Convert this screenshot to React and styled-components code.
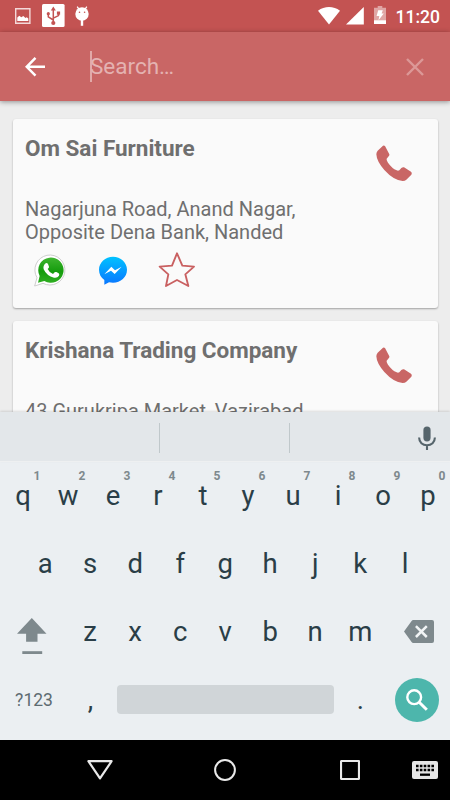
import React, { useState } from "react";
import styled, { createGlobalStyle, ThemeProvider } from "styled-components";

const theme = {
	primary: "#c96665",
	primaryDark: "#c35352",
	page: "#ededed",
	card: "#fafafa",
	text: "#6f6f6f",
	keyboard: "#ebeff2",
	strip: "#e3e7ea",
	key: "#2a3e47",
	keyMuted: "#7e898d",
	accent: "#4db6ac",
};

const contacts = [
	{
		name: "Om Sai Furniture",
		address: ["Nagarjuna Road, Anand Nagar,", "Opposite Dena Bank, Nanded"],
	},
	{
		name: "Krishana Trading Company",
		address: ["43 Gurukripa Market, Vazirabad"],
	},
];

const topRow = ["q", "w", "e", "r", "t", "y", "u", "i", "o", "p"];
const middleRow = ["a", "s", "d", "f", "g", "h", "j", "k", "l"];
const bottomRow = ["z", "x", "c", "v", "b", "n", "m"];

function PictureIcon() {
	return (
		<svg width="16" height="16" viewBox="0 0 16 16">
			<path d="M.7.7h14.2v14.6H.7z" fill="none" stroke="#f4d9d9" strokeWidth="1.4" />
			<path d="M2.3 13V9.6l2-1.8 2 1.4 2-1.3 2.2 2 1.2-.6 1.6 1.2V13z" fill="#fff" />
		</svg>
	);
}

function UsbIcon() {
	return (
		<svg width="23" height="23" viewBox="0 0 23 23">
			<rect width="22.6" height="23" rx="1.5" fill="#fff" />
			<g fill="none" stroke="#c35352" strokeWidth="1.5">
				<path d="M11.3 5v14M11.3 16 6.3 12.8V10M11.3 14.2l5.2-2.6V9" />
			</g>
			<g fill="#c35352">
				<path d="M11.3 2.6 13.8 6.4H8.8z" />
				<circle cx="11.3" cy="19" r="2.1" />
				<circle cx="6.3" cy="9.7" r="1.6" />
				<path d="M14.9 7.5h3.2v3.2h-3.2z" />
			</g>
		</svg>
	);
}

function DroidIcon() {
	return (
		<svg width="14" height="20" viewBox="0 0 14 20">
			<path d="M2.2.6 4.2 3.6M11.8.6 9.8 3.6" stroke="#fff" strokeWidth="1.3" />
			<circle cx="7" cy="8" r="6.7" fill="#fff" />
			<path d="M7 14v5.8" stroke="#fff" strokeWidth="2.4" />
			<circle cx="4.5" cy="6.2" r=".8" fill="#c35352" />
			<circle cx="9.6" cy="6.2" r=".8" fill="#c35352" />
		</svg>
	);
}

function WifiIcon() {
	return (
		<svg width="22" height="18" viewBox="0 0 22 18">
			<path d="M0 3.8C6.5-1.2 15.5-1.2 22 3.8L11 17.6z" fill="#fff" />
		</svg>
	);
}

function SignalIcon() {
	return (
		<svg width="18" height="18" viewBox="0 0 18 18">
			<path d="M17.8 0v17.6H0z" fill="#fff" />
		</svg>
	);
}

function BatteryIcon() {
	return (
		<svg width="12" height="18" viewBox="0 0 12 18">
			<path d="M3.7 0h4.6v1.7H12V18H0V1.7h3.7z" fill="#e0a6a5" />
			<path d="M0 14.3h12V18H0z" fill="#fff" />
			<path d="M4.2 4.3h4.6L7.6 7.5h2.2L4.5 14.3l.8-4.3H2.6z" fill="#fff" />
		</svg>
	);
}

function BackIcon() {
	return (
		<svg width="20" height="20" viewBox="0 0 20 20">
			<path d="M10.5.9 1.7 9.8l8.8 8.9M1.7 9.8H20" fill="none" stroke="#fff" strokeWidth="2.5" />
		</svg>
	);
}

function ClearIcon() {
	return (
		<svg width="18" height="18" viewBox="0 0 18 18">
			<path d="m1 1 16 16M17 1 1 17" stroke="#dc9897" strokeWidth="2.4" />
		</svg>
	);
}

function CallIcon() {
	return (
		<svg width="36" height="36" viewBox="0 0 108 108">
			<path
				d="M21 2Q24 0 27 3L40 28Q41 31 38 34L32 41Q31 45 36 53Q48 70 62 76Q66 78 70 76L76 69Q80 66 84 67L105 80Q109 83 106 89L91 104Q87 108 80 108Q53 106 25 75Q2 49 1 28Q1 22 5 17Z"
				fill="#c96665"
			/>
		</svg>
	);
}

function WhatsappIcon() {
	return (
		<svg width="32" height="33" viewBox="0 0 96 99">
			<defs>
				<linearGradient id="wa" x1="0" y1="0" x2="0" y2="1">
					<stop offset="0" stopColor="#3fb530" />
					<stop offset=".55" stopColor="#159c0d" />
					<stop offset="1" stopColor="#2fae22" />
				</linearGradient>
			</defs>
			<path
				d="M2 96 9 71A45 45 0 1 1 27 88Z"
				fill="#fff"
				stroke="#c4c4c4"
				strokeWidth="2.5"
				strokeLinejoin="round"
			/>
			<path d="M12 86 17 66A38 38 0 1 1 31 81Z" fill="url(#wa)" />
			<path
				d="M35 28Q39 26 42 30L45 38Q46 40 41 45Q46 56 57 60L62 55Q64 53 67 54L74 58Q77 60 75 65Q70 73 60 71Q38 66 29 46Q26 35 35 28Z"
				fill="#fff"
			/>
		</svg>
	);
}

function MessengerIcon() {
	return (
		<svg width="30" height="29" viewBox="0 0 90 87">
			<defs>
				<linearGradient id="ms" x1="0" y1="0" x2="0" y2="1">
					<stop offset="0" stopColor="#00c2ff" />
					<stop offset="1" stopColor="#0a76ff" />
				</linearGradient>
			</defs>
			<path d="M45 2C22 2 3 19 3 41C3 54 9 65 19 72V86L33 79Q39 80 45 80C68 80 87 63 87 41S68 2 45 2Z" fill="url(#ms)" />
			<path d="M19 55 40 32 51 43 71 32 50 54 39 44Z" fill="#fff" />
		</svg>
	);
}

function StarIcon() {
	return (
		<svg width="38" height="36" viewBox="0 0 114 108">
			<path
				d="M57 4 73 41 108 44 82 67 91 102 57 84 24 102 31 67 5 44 42 41Z"
				fill="none"
				stroke="#c96061"
				strokeWidth="5.6"
				strokeLinejoin="round"
			/>
		</svg>
	);
}

function MicIcon() {
	return (
		<svg width="18" height="24" viewBox="0 0 18 24">
			<rect x="5.4" y=".4" width="7.2" height="15" rx="3.6" fill="#56656c" />
			<path d="M1.1 11.6c0 4.7 3.5 7.6 7.9 7.6s7.9-2.9 7.9-7.6M9 19v5" fill="none" stroke="#56656c" strokeWidth="2.1" />
		</svg>
	);
}

function ShiftIcon() {
	return (
		<svg width="30" height="37" viewBox="0 0 30 37">
			<path d="M14.8 0 29.5 15.7h-9V23.7h-11.4V15.7H0z" fill="#7e898d" />
			<path d="M5.3 33.2h19.9v2.8H5.3z" fill="#7e898d" />
		</svg>
	);
}

function BackspaceIcon() {
	return (
		<svg width="30" height="23" viewBox="0 0 30 23">
			<path d="M7.6.9Q8.2 0 9.3 0H28Q30 0 30 2v19q0 2-2 2H9.3q-1.1 0-1.7-.9L0 11.5z" fill="#7e898d" />
			<path d="m11.9 6.1 10.9 10.9M22.8 6.1 11.9 17" stroke="#f1f4f5" strokeWidth="2.5" />
		</svg>
	);
}

function SearchIcon() {
	return (
		<svg width="22" height="22" viewBox="0 0 22 22">
			<circle cx="8.2" cy="8.2" r="6.9" fill="none" stroke="#fff" strokeWidth="2.4" />
			<path d="m13.2 13.2 7.6 7.6" stroke="#fff" strokeWidth="3" />
		</svg>
	);
}

function NavBackIcon() {
	return (
		<svg width="26" height="20" viewBox="0 0 26 20">
			<path d="M1.4 1.2h23.2L13 18.3z" fill="none" stroke="#e9e9e9" strokeWidth="2.2" strokeLinejoin="round" />
		</svg>
	);
}

function NavHomeIcon() {
	return (
		<svg width="22" height="22" viewBox="0 0 22 22">
			<circle cx="11" cy="11" r="9.9" fill="none" stroke="#e9e9e9" strokeWidth="2" />
		</svg>
	);
}

function NavRecentIcon() {
	return (
		<svg width="20" height="20" viewBox="0 0 20 20">
			<rect x="1" y="1" width="18" height="18" rx=".6" fill="none" stroke="#e9e9e9" strokeWidth="2.2" />
		</svg>
	);
}

function NavKeyboardIcon() {
	return (
		<svg width="26" height="18" viewBox="0 0 26 18">
			<rect width="26" height="18" rx="2" fill="#e6e6e6" />
			<path d="M4 5h18M4 9h18" stroke="#000" strokeWidth="2.3" strokeDasharray="2.6 1.25" />
			<path d="M8 13.7h10" stroke="#000" strokeWidth="2.3" />
		</svg>
	);
}

function ContactCard({ contact }) {
	return (
		<Card>
			<CardHead>
				<Name>{contact.name}</Name>
				<CallButton type="button" aria-label="Call">
					<CallIcon />
				</CallButton>
			</CardHead>
			<Address>
				{contact.address.map((line) => (
					<span key={line}>{line}</span>
				))}
			</Address>
			<Actions>
				<WhatsappIcon />
				<MessengerIcon />
				<StarIcon />
			</Actions>
		</Card>
	);
}

function App() {
	const [query, setQuery] = useState("");

	return (
		<ThemeProvider theme={theme}>
			<GlobalStyle />
			<Screen>
				<StatusBar>
					<PictureIcon />
					<UsbIcon />
					<DroidIcon />
					<StatusRight>
						<WifiIcon />
						<SignalIcon />
						<BatteryIcon />
						<Clock>11:20</Clock>
					</StatusRight>
				</StatusBar>
				<Toolbar>
					<BackIcon />
					<Caret />
					<SearchInput placeholder="Search…" value={query} onChange={(e) => setQuery(e.target.value)} />
					<ClearIcon />
				</Toolbar>
				<List>
					{contacts.map((contact) => (
						<ContactCard key={contact.name} contact={contact} />
					))}
				</List>
				<Suggestions>
					<Divider />
					<Divider />
					<MicIcon />
				</Suggestions>
				<Keyboard>
					<KeyRow>
						{topRow.map((letter, i) => (
							<Key key={letter} $nudge={1}>
								{letter}
								<Hint>{(i + 1) % 10}</Hint>
							</Key>
						))}
					</KeyRow>
					<KeyRow>
						{middleRow.map((letter) => (
							<Key key={letter}>{letter}</Key>
						))}
					</KeyRow>
					<KeyRow>
						<ShiftKey>
							<ShiftIcon />
						</ShiftKey>
						{bottomRow.map((letter) => (
							<Key key={letter}>{letter}</Key>
						))}
						<DeleteKey>
							<BackspaceIcon />
						</DeleteKey>
					</KeyRow>
					<KeyRow>
						<SymbolKey>?123</SymbolKey>
						<Key>,</Key>
						<SpaceKey />
						<Key>.</Key>
						<SearchKey>
							<SearchIcon />
						</SearchKey>
					</KeyRow>
				</Keyboard>
				<NavBar>
					<NavBackIcon />
					<NavHomeIcon />
					<NavRecentIcon />
					<NavKeyboardIcon />
				</NavBar>
			</Screen>
		</ThemeProvider>
	);
}

const GlobalStyle = createGlobalStyle`
	* {
		box-sizing: border-box;
	}
	body {
		margin: 0;
		font-family: Roboto, sans-serif;
	}
	svg {
		display: block;
		flex-shrink: 0;
	}
`;

const Screen = styled.div`
	width: 450px;
	height: 800px;
	display: flex;
	flex-direction: column;
	overflow: hidden;
	background: ${(props) => props.theme.page};
`;

const StatusBar = styled.header`
	height: 32px;
	flex-shrink: 0;
	display: flex;
	align-items: center;
	gap: 10.5px;
	padding: 0 10px 1px 15px;
	background: ${(props) => props.theme.primaryDark};
`;

const StatusRight = styled.div`
	margin-left: auto;
	display: flex;
	align-items: center;
	gap: 6px;

	svg:nth-child(3) {
		margin: -1px 4px 0 4px;
	}
`;

const Clock = styled.span`
	font-size: 17.5px;
	line-height: 20px;
	padding-top: 2px;
	font-weight: 500;
	color: #fff;
`;

const Toolbar = styled.div`
	height: 69.4px;
	flex-shrink: 0;
	display: flex;
	align-items: center;
	padding: 0 26px 0 25px;
	background: ${(props) => props.theme.primary};
	box-shadow: 0 1px 5px rgba(0, 0, 0, 0.4);
	z-index: 1;
`;

const Caret = styled.span`
	width: 2px;
	height: 31px;
	margin-left: 45px;
	background: #e2a9a8;
`;

const SearchInput = styled.input`
	flex: 1;
	min-width: 0;
	margin-left: -2px;
	padding: 0 0 2px;
	border: none;
	outline: none;
	background: transparent;
	font-family: inherit;
	font-size: 22.5px;
	color: #fff;

	&::placeholder {
		color: #e4b2b1;
		opacity: 1;
	}
`;

const List = styled.main`
	flex: 1;
	min-height: 0;
	overflow: hidden;
	display: flex;
	flex-direction: column;
	gap: 13px;
	padding: 17.6px 12.5px 0;
`;

const Card = styled.article`
	height: 189px;
	flex-shrink: 0;
	padding: 15.6px 12.5px;
	border-radius: 3px;
	background: ${(props) => props.theme.card};
	box-shadow: 0 1px 2px rgba(0, 0, 0, 0.32);
`;

const CardHead = styled.div`
	display: flex;
	justify-content: space-between;
	height: 63.4px;
`;

const Name = styled.h2`
	margin: 0;
	font-size: 22.5px;
	line-height: 27.5px;
	font-weight: 700;
	letter-spacing: -0.02px;
	color: ${(props) => props.theme.text};
`;

const CallButton = styled.button`
	align-self: flex-start;
	margin: 10px 13.5px 0 0;
	padding: 0;
	border: none;
	background: none;
`;

const Address = styled.p`
	margin: 0;
	display: flex;
	flex-direction: column;
	font-size: 20px;
	line-height: 23.4px;
	color: ${(props) => props.theme.text};
`;

const Actions = styled.div`
	display: flex;
	align-items: center;
	gap: 32px;
	margin: 7.5px 0 0 9.3px;

	svg:nth-child(3) {
		margin-left: -2.5px;
	}
`;

const Suggestions = styled.div`
	height: 50px;
	flex-shrink: 0;
	display: flex;
	align-items: center;
	padding: 3px 14px 0 0;
	border-bottom: 1px solid #eef0f1;
	background: ${(props) => props.theme.strip};
	box-shadow: 0 -1px 2px rgba(0, 0, 0, 0.12);
	z-index: 1;

	svg {
		margin-left: auto;
	}
`;

const Divider = styled.span`
	width: 1px;
	height: 30px;
	margin-left: 158.6px;
	background: #c0c8cb;

	& + & {
		margin-left: 129px;
	}
`;

const Keyboard = styled.section`
	height: 278.4px;
	flex-shrink: 0;
	background: ${(props) => props.theme.keyboard};
`;

const KeyRow = styled.div`
	height: 68.1px;
	display: flex;
	align-items: center;
	justify-content: center;
`;

const Key = styled.div`
	position: relative;
	width: 45px;
	height: 100%;
	flex-shrink: 0;
	display: flex;
	align-items: center;
	justify-content: center;
	padding-left: ${(props) => props.$nudge ?? 0.4}px;
	font-size: 27.5px;
	color: ${(props) => props.theme.key};
`;

const Hint = styled.span`
	position: absolute;
	top: 7.5px;
	right: 4.5px;
	font-size: 12px;
	line-height: 14px;
	font-weight: 700;
	color: ${(props) => props.theme.keyMuted};
`;

const SideKey = styled.div`
	width: 67.5px;
	height: 100%;
	flex-shrink: 0;
	display: flex;
	align-items: center;
`;

const ShiftKey = styled(SideKey)`
	padding: 10px 0 0 17px;
`;

const DeleteKey = styled(SideKey)`
	padding: 0 0 1px 21px;
`;

const SymbolKey = styled(SideKey)`
	justify-content: center;
	font-size: 17.5px;
	color: #5d6b71;
`;

const SpaceKey = styled.div`
	width: 217px;
	height: 29px;
	margin: 0 4px;
	border-radius: 4px;
	background: #d0d5d8;
`;

const SearchKey = styled.div`
	width: 44px;
	height: 44px;
	margin: 0 11px 0 12px;
	border-radius: 50%;
	display: flex;
	align-items: center;
	justify-content: center;
	background: ${(props) => props.theme.accent};
`;

const NavBar = styled.footer`
	height: 60px;
	flex-shrink: 0;
	display: flex;
	align-items: center;
	padding: 0 12px 0 87px;
	background: #000;

	svg:nth-child(2) {
		margin-left: 101px;
	}
	svg:nth-child(3) {
		margin-left: 104px;
	}
	svg:nth-child(4) {
		margin-left: auto;
	}
`;

export default App;
